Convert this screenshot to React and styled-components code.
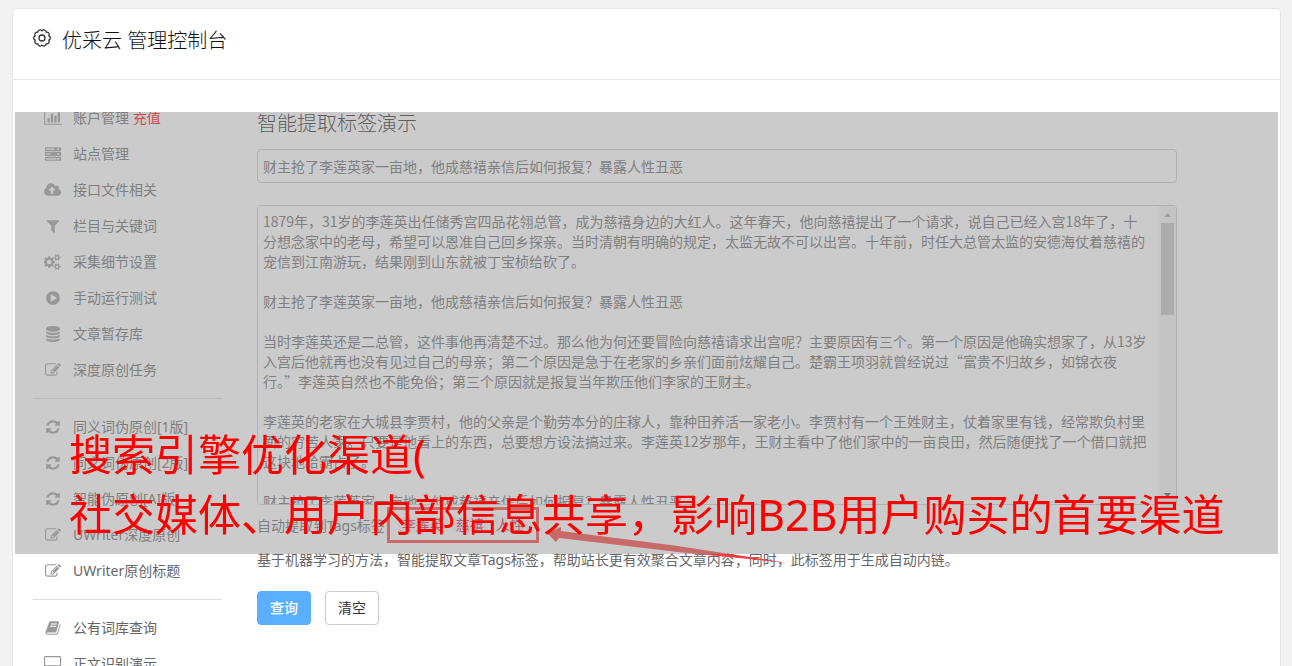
import React from 'react';
import styled, { createGlobalStyle } from 'styled-components';

const GlobalStyle = createGlobalStyle`
  * {
    box-sizing: border-box;
  }

  body {
    margin: 0;
    background: #f2f2f2;
    color: #666;
    font-family: "Noto Sans", "Noto Sans CJK SC", sans-serif;
    font-size: 14px;
    line-height: 20px;
  }

  button, input, textarea {
    font: inherit;
    color: inherit;
  }
`;

const Page = styled.div`
  display: flex;
  height: 100vh;
  padding: 8px 11px 0 12px;
  overflow: hidden;
`;

const Card = styled.div`
  flex: 1;
  min-width: 0;
  height: 900px;
  border: 1px solid #e5e5e5;
  border-radius: 4px;
  background: #fff;
`;

const Header = styled.header`
  display: flex;
  align-items: flex-start;
  gap: 11px;
  height: 71px;
  padding: 16px 20px;
  border-bottom: 1px solid #e5e5e5;
`;

const HeaderIcon = styled.svg`
  width: 18px;
  height: 26px;
  fill: none;
  stroke: #333;
`;

const Brand = styled.h1`
  margin: 0;
  color: #111;
  font-size: 20px;
  font-weight: 300;
  line-height: 32px;
`;

const Body = styled.div`
  position: relative;
  display: flex;
  gap: 35px;
  margin-top: 32px;
  padding: 0 20px;
  overflow: hidden;
`;

const Sidebar = styled.nav`
  flex: 0 0 189px;
  margin-top: -12px;
`;

const MenuLink = styled.a`
  display: flex;
  align-items: center;
  gap: 10px;
  height: 36px;
  padding-left: 10px;
  color: #666;
  text-decoration: none;
`;

const IconBox = styled.span`
  display: flex;
  justify-content: center;
  width: 20px;
  color: #999;

  & > svg {
    height: 16px;
    width: auto;
    fill: currentColor;
  }
`;

const Recharge = styled.span`
  color: #f00;
`;

const Divider = styled.hr`
  margin: 10px 0;
  border: 0;
  border-top: 1px solid #ddd;
`;

const Main = styled.main`
  flex: 1;
  min-width: 0;
  max-width: 920px;
`;

const Title = styled.h2`
  margin: 0 0 13px;
  color: #222;
  font-size: 20px;
  font-weight: 300;
  line-height: 24px;
`;

const TitleInput = styled.input`
  display: block;
  width: 100%;
  height: 34px;
  margin-bottom: 22px;
  padding: 6px 5px;
  border: 1px solid #ccc;
  border-radius: 4px;
  background: #fff;
  outline: none;
`;

const ArticleBox = styled.div`
  display: flex;
  height: 300px;
  border: 1px solid #ccc;
  border-radius: 4px;
  overflow: hidden;
`;

const ArticleText = styled.textarea`
  flex: 1;
  min-width: 0;
  padding: 5px 10px 0 5px;
  border: 0;
  background: #fff;
  font-family: "Noto Sans CJK SC", sans-serif;
  line-height: 20px;
  resize: none;
  outline: none;
  overflow-y: scroll;
  scrollbar-width: none;
`;

const ScrollTrack = styled.div`
  display: flex;
  flex-direction: column;
  width: 17px;
  padding: 0 2px;
  background: #f1f1f1;
`;

const ScrollArrow = styled.svg`
  width: 13px;
  height: 17px;
  fill: ${({ $active }) => ($active ? '#505050' : '#a3a3a3')};
`;

const ScrollThumb = styled.div`
  height: 92px;
  margin-bottom: auto;
  background: #c1c1c1;
`;

const TagLine = styled.div`
  display: flex;
  align-items: center;
  height: 42px;
`;

const TagFrame = styled.span`
  display: flex;
  gap: 4px;
  height: 36px;
  margin: 0 0 2px -12px;
  padding: 7px 8px;
  border: 3px solid #fa3c3c;
`;

const Tag = styled.code`
  padding: 0 4px;
  border-radius: 4px;
  background: #f9f2f4;
  color: #c7254e;
  font-family: "Liberation Mono", "Noto Sans CJK SC", monospace;
  font-size: 14px;
  line-height: 18px;
`;

const Hint = styled.p`
  margin: 3px 0 21px;
`;

const Actions = styled.div`
  display: flex;
  gap: 14px;
`;

const Button = styled.button`
  width: 54px;
  height: 34px;
  padding: 0;
  border: 1px solid ${({ $primary }) => ($primary ? '#5aafff' : '#ccc')};
  border-radius: 4px;
  background: ${({ $primary }) => ($primary ? '#5aafff' : '#fff')};
  color: ${({ $primary }) => ($primary ? '#fff' : '#333')};
  font-weight: ${({ $primary }) => ($primary ? 500 : 400)};
`;

const Arrow = styled.svg`
  position: absolute;
  top: 410px;
  left: 530px;
  width: 260px;
  height: 50px;
  fill: #fa3c3c;
`;

const Mask = styled.div`
  position: absolute;
  top: 0;
  left: 2px;
  right: 2px;
  height: 442px;
  background: rgba(151, 151, 151, 0.5);
`;

const Caption = styled.p`
  position: absolute;
  top: 313px;
  left: 56px;
  margin: 0;
  color: #f00;
  font-size: 43px;
  line-height: 60px;
  white-space: nowrap;
`;

const icons = {
  chart: [2048, 'M640 896v512h-256v-512h256zm384-512v1024h-256v-1024h256zm1024 1152v128h-2048v-1536h128v1408h1920zm-640-896v768h-256v-768h256zm384-384v1152h-256v-1152h256z'],
  server: [1792, 'M0 128h1792v448h-1792zM128 288v128h896v-128zM1472 256a96 96 0 1 0 1 0zM0 672h1792v448h-1792zM128 832v128h512v-128zM1472 800a96 96 0 1 0 1 0zM0 1216h1792v448h-1792zM128 1376v128h1152v-128zM1472 1344a96 96 0 1 0 1 0z'],
  cloud: [1920, 'M1280 928q0-14-9-23l-352-352q-9-9-23-9t-23 9l-351 351q-10 12-10 24 0 14 9 23t23 9h224v352q0 13 9.5 22.5t22.5 9.5h192q13 0 22.5-9.5t9.5-22.5v-352h224q13 0 22.5-9.5t9.5-22.5zm640 224q0 159-112.5 271.5t-271.5 112.5h-1088q-185 0-316.5-131.5t-131.5-316.5q0-130 70-240t188-165q-2-30-2-43 0-212 150-362t362-150q156 0 285.5 87t188.5 231q71-62 166-62 106 0 181 75t75 181q0 76-41 138 130 31 213.5 135.5t83.5 238.5z'],
  filter: [1792, 'M1595 295q17 41-14 70l-493 493v742q0 42-39 59-13 5-25 5-27 0-45-19l-256-256q-19-19-19-45v-486l-493-493q-31-29-14-70 17-39 59-39h1280q42 0 59 39z'],
  cogs: [1920, 'M832 896q0-106-75-181t-181-75-181 75-75 181 75 181 181 75 181-75 75-181zm768 512q0-52-38-90t-90-38-90 38-38 90q0 53 37.5 90.5t90.5 37.5 90.5-37.5 37.5-90.5zm0-1024q0-52-38-90t-90-38-90 38-38 90q0 53 37.5 90.5t90.5 37.5 90.5-37.5 37.5-90.5zm-384 421v185q0 10-7 19.5t-16 10.5l-155 24q-11 35-32 76 34 48 90 115 7 11 7 20 0 12-7 19-23 30-82.5 89.5t-78.5 59.5q-11 0-21-7l-115-90q-37 19-77 31-11 108-23 155-7 24-30 24h-186q-11 0-20-7.5t-10-17.5l-23-153q-34-10-75-31l-118 89q-7 7-20 7-11 0-21-8-144-133-144-160 0-9 7-19 10-14 41-53t47-61q-23-44-35-82l-152-24q-10-1-17-9.5t-7-19.5v-185q0-10 7-19.5t16-10.5l155-24q11-35 32-76-34-48-90-115-7-11-7-20 0-12 7-20 22-30 82-89t79-59q11 0 21 7l115 90q34-18 77-32 11-108 23-154 7-24 30-24h186q11 0 20 7.5t10 17.5l23 153q34 10 75 31l118-89q8-7 20-7 11 0 21 8 144 133 144 160 0 8-7 19-12 16-42 54t-45 60q23 48 34 82l152 23q10 2 17 10.5t7 19.5zm640 533v140q0 16-149 31-12 27-30 52 51 113 51 138 0 4-4 7-122 71-124 71-8 0-46-47t-52-68q-20 2-30 2t-30-2q-14 21-52 68t-46 47q-2 0-124-71-4-3-4-7 0-25 51-138-18-25-30-52-149-15-149-31v-140q0-16 149-31 13-29 30-52-51-113-51-138 0-4 4-7 4-2 35-20t59-34 30-16q8 0 46 46.5t52 67.5q20-2 30-2t30 2q51-71 92-112l6-2q4 0 124 70 4 3 4 7 0 25-51 138 17 23 30 52 149 15 149 31zm0-1024v140q0 16-149 31-12 27-30 52 51 113 51 138 0 4-4 7-122 71-124 71-8 0-46-47t-52-68q-20 2-30 2t-30-2q-14 21-52 68t-46 47q-2 0-124-71-4-3-4-7 0-25 51-138-18-25-30-52-149-15-149-31v-140q0-16 149-31 13-29 30-52-51-113-51-138 0-4 4-7 4-2 35-20t59-34 30-16q8 0 46 46.5t52 67.5q20-2 30-2t30 2q51-71 92-112l6-2q4 0 124 70 4 3 4 7 0 25-51 138 17 23 30 52 149 15 149 31z'],
  play: [1792, 'M896 128q209 0 385.5 103t279.5 279.5 103 385.5-103 385.5-279.5 279.5-385.5 103-385.5-103-279.5-279.5-103-385.5 103-385.5 279.5-279.5 385.5-103zm384 823q32-18 32-55t-32-55l-544-320q-31-19-64-1-32 19-32 56v640q0 37 32 56 16 8 32 8 17 0 32-9z'],
  database: [1792, 'M896 768q237 0 443-43t325-127v170q0 69-103 128t-280 93.5-385 34.5-385-34.5-280-93.5-103-128v-170q119 84 325 127t443 43zm0 768q237 0 443-43t325-127v170q0 69-103 128t-280 93.5-385 34.5-385-34.5-280-93.5-103-128v-170q119 84 325 127t443 43zm0-384q237 0 443-43t325-127v170q0 69-103 128t-280 93.5-385 34.5-385-34.5-280-93.5-103-128v-170q119 84 325 127t443 43zm0-1152q208 0 385 34.5t280 93.5 103 128v128q0 69-103 128t-280 93.5-385 34.5-385-34.5-280-93.5-103-128v-128q0-69 103-128t280-93.5 385-34.5z'],
  edit: [1792, 'M888 1184l116-116-152-152-116 116v56h96v96h56zm440-720q-16-16-33 1l-350 350q-17 17-1 33t33-1l350-350q17-17 1-33zm80 594v190q0 119-84.5 203.5t-203.5 84.5h-832q-119 0-203.5-84.5t-84.5-203.5v-832q0-119 84.5-203.5t203.5-84.5h832q63 0 117 25 15 7 18 23 3 17-9 29l-49 49q-14 14-32 8-23-6-45-6h-832q-66 0-113 47t-47 113v832q0 66 47 113t113 47h832q66 0 113-47t47-113v-126q0-13 9-22l64-64q15-15 35-7t20 29zm-96-738l288 288-672 672h-288v-288zm444 132l-92 92-288-288 92-92q28-28 68-28t68 28l152 152q28 28 28 68t-28 68z'],
  refresh: [1792, 'M1639 1056q0 5-1 7-64 268-268 434.5t-478 166.5q-146 0-282.5-55t-243.5-157l-129 129q-19 19-45 19t-45-19-19-45v-448q0-26 19-45t45-19h448q26 0 45 19t19 45-19 45l-137 137q71 66 161 102t187 36q134 0 250-65t186-179q11-17 53-117 8-23 30-23h192q13 0 22.5 9.5t9.5 22.5zm25-800v448q0 26-19 45t-45 19h-448q-26 0-45-19t-19-45 19-45l138-138q-148-137-349-137-134 0-250 65t-186 179q-11 17-53 117-8 23-30 23h-199q-13 0-22.5-9.5t-9.5-22.5v-7q65-268 270-434.5t480-166.5q146 0 284 55.5t245 156.5l130-129q19-19 45-19t45 19 19 45z'],
  book: [1792, 'M1703 478q40 57 18 129l-275 906q-19 64-76.5 107.5t-122.5 43.5h-923q-77 0-148.5-53.5t-99.5-131.5q-24-67-2-127 0-4 3-27t4-37q1-8-3-21.5t-3-19.5q2-11 8-21t16.5-23.5 16.5-23.5q23-38 45-91.5t30-91.5q3-10 .5-30t-.5-28q3-11 17-28t17-23q21-36 42-92t25-90q1-9-2.5-32t.5-28q4-13 22-30.5t22-22.5q19-26 42.5-84.5t27.5-96.5q1-8-3-25.5t-2-26.5q2-8 9-18t18-23 17-21q8-12 16.5-30.5t15-35 16-36 19.5-32 26.5-23.5 36-11.5 47.5 5.5l-1 3q38-9 51-9h761q74 0 114 56t18 130l-274 906q-36 119-71.5 153.5t-128.5 34.5h-869q-27 0-38 15-11 16-1 43 24 70 144 70h923q29 0 56-15.5t35-41.5l300-987q7-22 5-57 38 15 59 43zm-1064 2q-4 13 2 22.5t20 9.5h608q13 0 25.5-9.5t16.5-22.5l21-64q4-13-2-22.5t-20-9.5h-608q-13 0-25.5 9.5t-16.5 22.5zm-83 256q-4 13 2 22.5t20 9.5h608q13 0 25.5-9.5t16.5-22.5l21-64q4-13-2-22.5t-20-9.5h-608q-13 0-25.5 9.5t-16.5 22.5z'],
  desktop: [1920, 'M1792 992v-832q0-32-32-32h-1600q-32 0-32 32v832q0 32 32 32h1600q32 0 32-32zM1920 160v1088q0 66-47 113t-113 47h-544l64 192v64h-640v-64l64-192h-544q-66 0-113-47t-47-113v-1088q0-66 47-113t113-47h1600q66 0 113 47t47 113z'],
};

const menu = [
  [
    { icon: 'chart', label: '账户管理', extra: '充值' },
    { icon: 'server', label: '站点管理' },
    { icon: 'cloud', label: '接口文件相关' },
    { icon: 'filter', label: '栏目与关键词' },
    { icon: 'cogs', label: '采集细节设置' },
    { icon: 'play', label: '手动运行测试' },
    { icon: 'database', label: '文章暂存库' },
    { icon: 'edit', label: '深度原创任务' },
  ],
  [
    { icon: 'refresh', label: '同义词伪原创[1版]' },
    { icon: 'refresh', label: '同义词伪原创[2版]' },
    { icon: 'refresh', label: '智能伪原创[AI版]' },
    { icon: 'edit', label: 'UWriter深度原创' },
    { icon: 'edit', label: 'UWriter原创标题' },
  ],
  [
    { icon: 'book', label: '公有词库查询' },
    { icon: 'desktop', label: '正文识别演示' },
  ],
];

const headline = '财主抢了李莲英家一亩地，他成慈禧亲信后如何报复？暴露人性丑恶';

const article = [
  '1879年，31岁的李莲英出任储秀宫四品花翎总管，成为慈禧身边的大红人。这年春天，他向慈禧提出了一个请求，说自己已经入宫18年了，十分想念家中的老母，希望可以恩准自己回乡探亲。当时清朝有明确的规定，太监无故不可以出宫。十年前，时任大总管太监的安德海仗着慈禧的宠信到江南游玩，结果刚到山东就被丁宝桢给砍了。',
  headline,
  '当时李莲英还是二总管，这件事他再清楚不过。那么他为何还要冒险向慈禧请求出宫呢？主要原因有三个。第一个原因是他确实想家了，从13岁入宫后他就再也没有见过自己的母亲；第二个原因是急于在老家的乡亲们面前炫耀自己。楚霸王项羽就曾经说过“富贵不归故乡，如锦衣夜行。”李莲英自然也不能免俗；第三个原因就是报复当年欺压他们李家的王财主。',
  '李莲英的老家在大城县李贾村，他的父亲是个勤劳本分的庄稼人，靠种田养活一家老小。李贾村有一个王姓财主，仗着家里有钱，经常欺负村里面的穷苦人家。只要是他看上的东西，总要想方设法搞过来。李莲英12岁那年，王财主看中了他们家中的一亩良田，然后随便找了一个借口就把这块地给霸占了。',
  headline,
].join('\n\n');

const tags = ['李莲英', '慈禧', '人性'];

function MenuIcon({ name }) {
  const [width, path] = icons[name];
  return (
    <svg viewBox={`0 0 ${width} 1792`} fillRule="evenodd">
      <path d={path} />
    </svg>
  );
}

// scalloped outline of the gear, one bump for each of its ten teeth
const gearPoints = Array.from({ length: 10 }, (_, i) => {
  const angle = (i * Math.PI) / 5 - Math.PI / 10;
  return [9 + 7.2 * Math.cos(angle), 13 + 7.2 * Math.sin(angle)];
});

const gearPath =
  `M${gearPoints[9].join(' ')}` +
  gearPoints.map(([x, y]) => `A2.4 2.4 0 0 1 ${x} ${y}`).join('') +
  'Z';

function App() {
  return (
    <Page>
      <GlobalStyle />
      <Card>
        <Header>
          <HeaderIcon viewBox="0 0 18 26">
            <path d={gearPath} strokeWidth="1.3" />
            <circle cx="9" cy="13" r="3" strokeWidth="1.3" />
          </HeaderIcon>
          <Brand>优采云 管理控制台</Brand>
        </Header>
        <Body>
          <Sidebar>
            {menu.map((group, index) => (
              <React.Fragment key={index}>
                {index > 0 && <Divider />}
                {group.map((item) => (
                  <MenuLink href="#" key={item.label}>
                    <IconBox>
                      <MenuIcon name={item.icon} />
                    </IconBox>
                    <span>
                      {item.label}
                      {item.extra && <Recharge> {item.extra}</Recharge>}
                    </span>
                  </MenuLink>
                ))}
              </React.Fragment>
            ))}
          </Sidebar>
          <Main>
            <Title>智能提取标签演示</Title>
            <TitleInput aria-label="文章标题" defaultValue={headline} />
            <ArticleBox>
              <ArticleText aria-label="文章内容" spellCheck={false} defaultValue={article} />
              <ScrollTrack>
                <ScrollArrow viewBox="0 0 13 17">
                  <path d="M3 11L6.5 7L10 11Z" />
                </ScrollArrow>
                <ScrollThumb />
                <ScrollArrow viewBox="0 0 13 17" $active>
                  <path d="M3 6L6.5 10L10 6Z" />
                </ScrollArrow>
              </ScrollTrack>
            </ArticleBox>
            <TagLine>
              自动提取到Tags标签：
              <TagFrame>
                {tags.map((tag) => (
                  <Tag key={tag}>{tag}</Tag>
                ))}
              </TagFrame>
            </TagLine>
            <Hint>基于机器学习的方法，智能提取文章Tags标签，帮助站长更有效聚合文章内容；同时，此标签用于生成自动内链。</Hint>
            <Actions>
              <Button $primary>查询</Button>
              <Button>清空</Button>
            </Actions>
          </Main>
          <Arrow viewBox="0 0 260 50">
            <path d="M4 11L18 5L18 9L135 24L245 41L135 30L16 16L13 20Z" />
          </Arrow>
          <Mask />
          <Caption>
            搜索引擎优化渠道(<br />
            社交媒体、用户内部信息共享，影响B2B用户购买的首要渠道
          </Caption>
        </Body>
      </Card>
    </Page>
  );
}

export default App;
